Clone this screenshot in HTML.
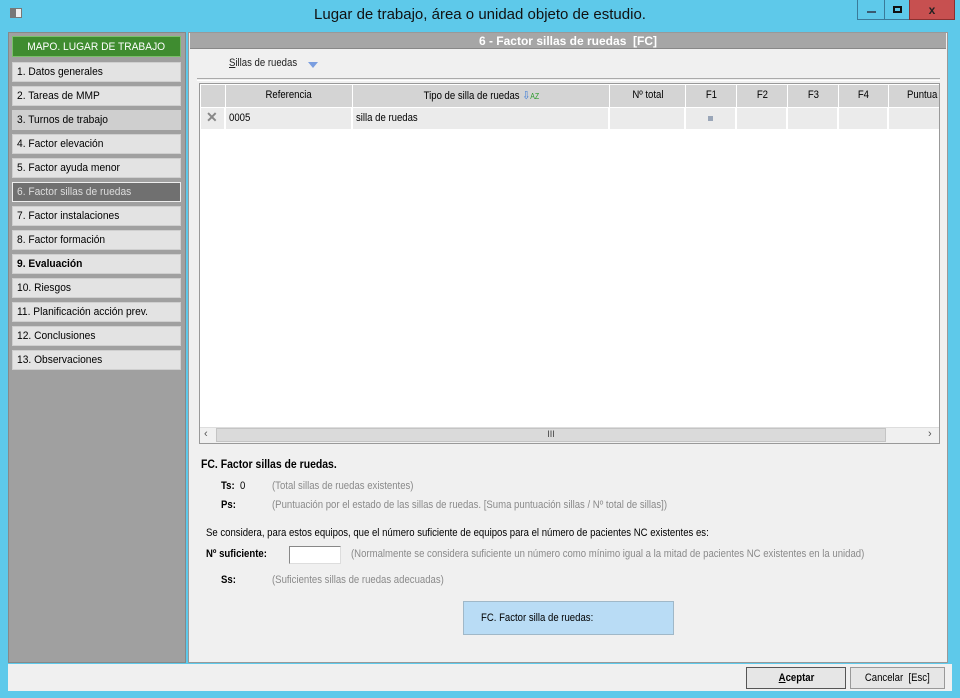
<!DOCTYPE html>
<html><head><meta charset="utf-8"><style>
*{box-sizing:border-box;margin:0;padding:0}
body{width:960px;height:698px;background:#5ec9ea;font-family:"Liberation Sans",sans-serif;font-size:11px;color:#000;position:relative;overflow:hidden}
.a{position:absolute}
.n{display:inline-block;transform:scaleX(.87);transform-origin:left center;white-space:nowrap}
.s{display:inline-block;transform:scaleX(.93);transform-origin:left center;white-space:nowrap}
.side{left:8px;top:32px;width:178px;height:631px;background:#a0a0a0;border:1px solid #888}
.it{left:12px;width:169px;height:20px;background:#e3e3e3;border:1px solid #cfcfcf;padding:3px 0 0 4px;font-size:11px;white-space:nowrap}
.main{left:188px;top:32px;width:760px;height:631px;background:#f0f0f0;border:1px solid #999}
.th{top:85px;height:22px;background:#d4d4d4;border-right:1px solid #fff;text-align:center;padding-top:4px;font-size:11px}
.td{top:108px;height:21px;background:#ebebeb;border-right:2px solid #fff;padding:4px 0 0 3px;font-size:11px}
.g{color:#8a8a8a}
</style></head><body>
<div class="a" style="left:10px;top:8px;width:12px;height:10px;background:#eee;border:1px solid #777"></div>
<div class="a" style="left:11px;top:9px;width:5px;height:8px;background:#777"></div>
<div class="a" style="left:0;top:6px;width:960px;text-align:center;font-size:15px;color:#111">Lugar de trabajo, área o unidad objeto de estudio.</div>
<div class="a" style="left:857px;top:0;width:28px;height:20px;border:1px solid #3a7a99;border-top:none;background:#5ec9ea"><div class="a" style="left:9px;top:11px;width:9px;height:2px;background:#3a5a70"></div></div>
<div class="a" style="left:884px;top:0;width:26px;height:20px;border:1px solid #3a7a99;border-top:none;background:#5ec9ea"><div class="a" style="left:8px;top:6px;width:9px;height:7px;border:2px solid #111"></div></div>
<div class="a" style="left:909px;top:0;width:46px;height:20px;background:#c75050;border:1px solid #8a3030;border-top:none;color:#222;font-weight:bold;font-size:12px;text-align:center;padding-top:3px">x</div>
<div class="a side"></div>
<div class="a" style="left:12px;top:36px;width:169px;height:21px;background:#3f8c30;border:1px solid #7ac06a;color:#fff;text-align:center;padding-top:4px"><span class="s" style="transform-origin:center">MAPO. LUGAR DE TRABAJO</span></div>
<div class="a it" style="top:62px"><span class="s">1. Datos generales</span></div>
<div class="a it" style="top:86px"><span class="s">2. Tareas de MMP</span></div>
<div class="a it" style="top:110px;background:#cfcfcf"><span class="s">3. Turnos de trabajo</span></div>
<div class="a it" style="top:134px"><span class="s">4. Factor elevación</span></div>
<div class="a it" style="top:158px"><span class="s">5. Factor ayuda menor</span></div>
<div class="a it" style="top:182px;background:#707070;border-color:#eee;color:#ddd"><span class="s">6. Factor sillas de ruedas</span></div>
<div class="a it" style="top:206px"><span class="s">7. Factor instalaciones</span></div>
<div class="a it" style="top:230px"><span class="s">8. Factor formación</span></div>
<div class="a it" style="top:254px;font-weight:bold"><span class="s">9. Evaluación</span></div>
<div class="a it" style="top:278px"><span class="s">10. Riesgos</span></div>
<div class="a it" style="top:302px"><span class="s">11. Planificación acción prev.</span></div>
<div class="a it" style="top:326px"><span class="s">12. Conclusiones</span></div>
<div class="a it" style="top:350px"><span class="s">13. Observaciones</span></div>
<div class="a main"></div>
<div class="a" style="left:190px;top:33px;width:756px;height:16px;background:#a6a6a6;border-bottom:1px solid #888;color:#fff;font-weight:bold;font-size:12px;text-align:center;padding-top:1px">6 - Factor sillas de ruedas&nbsp; [FC]</div>
<div class="a" style="left:229px;top:57px;color:#222"><span class="n"><u>S</u>illas de ruedas</span></div>
<div class="a" style="left:308px;top:62px;width:0;height:0;border-left:5px solid transparent;border-right:5px solid transparent;border-top:6px solid #7a9ee0"></div>
<div class="a" style="left:197px;top:78px;width:743px;height:3px;border-top:1px solid #aaa;border-bottom:1px solid #fff"></div>
<div class="a" style="left:199px;top:83px;width:741px;height:361px;background:#fff;border:1px solid #999"></div>
<div class="a th" style="left:201px;width:25px"></div>
<div class="a th" style="left:226px;width:127px"><span class="n" style="transform-origin:center">Referencia</span></div>
<div class="a th" style="left:353px;width:257px"><span class="n" style="transform-origin:center">Tipo de silla de ruedas <span style="color:#3a7ad8">⇩</span><span style="color:#2a9a2a;font-size:8px">AZ</span></span></div>
<div class="a th" style="left:610px;width:76px"><span class="n" style="transform-origin:center">Nº total</span></div>
<div class="a th" style="left:686px;width:51px"><span class="n" style="transform-origin:center">F1</span></div>
<div class="a th" style="left:737px;width:51px"><span class="n" style="transform-origin:center">F2</span></div>
<div class="a th" style="left:788px;width:51px"><span class="n" style="transform-origin:center">F3</span></div>
<div class="a th" style="left:839px;width:50px"><span class="n" style="transform-origin:center">F4</span></div>
<div class="a th" style="left:889px;width:50px;border-right:none;text-align:left;padding-left:18px"><span class="n">Puntua</span></div>
<div class="a td" style="left:201px;width:25px;color:#888;font-size:14px;font-weight:bold;padding:1px 0 0 5px">✕</div>
<div class="a td" style="left:226px;width:127px"><span class="n">0005</span></div>
<div class="a td" style="left:353px;width:257px"><span class="n">silla de ruedas</span></div>
<div class="a td" style="left:610px;width:76px"></div>
<div class="a td" style="left:686px;width:51px"><div class="a" style="left:22px;top:8px;width:5px;height:5px;background:#9aa6b8"></div></div>
<div class="a td" style="left:737px;width:51px"></div>
<div class="a td" style="left:788px;width:51px"></div>
<div class="a td" style="left:839px;width:50px"></div>
<div class="a td" style="left:889px;width:50px;border-right:none"></div>
<div class="a" style="left:200px;top:427px;width:739px;height:16px;background:#f0f0f0;border-top:1px solid #ddd"></div>
<div class="a" style="left:204px;top:428px;color:#555">‹</div>
<div class="a" style="left:216px;top:428px;width:670px;height:14px;background:#dadada;border:1px solid #c4c4c4;text-align:center;font-size:9px;color:#444">III</div>
<div class="a" style="left:928px;top:428px;color:#555">›</div>
<div class="a" style="left:201px;top:457px;font-weight:bold;font-size:12px"><span class="n">FC. Factor sillas de ruedas.</span></div>
<div class="a" style="left:221px;top:480px;font-weight:bold"><span class="n">Ts:&nbsp; <span style="font-weight:normal">0</span></span></div>
<div class="a g" style="left:272px;top:480px"><span class="n">(Total sillas de ruedas existentes)</span></div>
<div class="a" style="left:221px;top:499px;font-weight:bold"><span class="n">Ps:</span></div>
<div class="a g" style="left:272px;top:499px"><span class="n">(Puntuación por el estado de las sillas de ruedas. [Suma puntuación sillas / Nº total de sillas])</span></div>
<div class="a" style="left:206px;top:527px"><span class="n">Se considera, para estos equipos, que el número suficiente de equipos para el número de pacientes NC existentes es:</span></div>
<div class="a" style="left:206px;top:548px;font-weight:bold"><span class="n">Nº suficiente:</span></div>
<div class="a" style="left:289px;top:546px;width:52px;height:18px;background:#fff;border:1px solid #888;border-right-color:#ddd;border-bottom-color:#ddd"></div>
<div class="a g" style="left:351px;top:548px"><span class="n">(Normalmente se considera suficiente un número como mínimo igual a la mitad de pacientes NC existentes en la unidad)</span></div>
<div class="a" style="left:221px;top:574px;font-weight:bold"><span class="n">Ss:</span></div>
<div class="a g" style="left:272px;top:574px"><span class="n">(Suficientes sillas de ruedas adecuadas)</span></div>
<div class="a" style="left:463px;top:601px;width:211px;height:34px;background:#b9dcf5;border:1px solid #a0b8c8;padding:10px 0 0 17px"><span class="n">FC. Factor silla de ruedas:</span></div>
<div class="a" style="left:8px;top:664px;width:944px;height:27px;background:#f0f0f0"></div>
<div class="a" style="left:746px;top:667px;width:100px;height:22px;background:#e6e6e6;border:1px solid #555;text-align:center;padding-top:4px;font-weight:bold"><span class="n" style="transform-origin:center"><u>A</u>ceptar</span></div>
<div class="a" style="left:850px;top:667px;width:95px;height:22px;background:#e6e6e6;border:1px solid #999;text-align:center;padding-top:4px"><span class="n" style="transform-origin:center">Cancelar&nbsp; [Esc]</span></div>
</body></html>
